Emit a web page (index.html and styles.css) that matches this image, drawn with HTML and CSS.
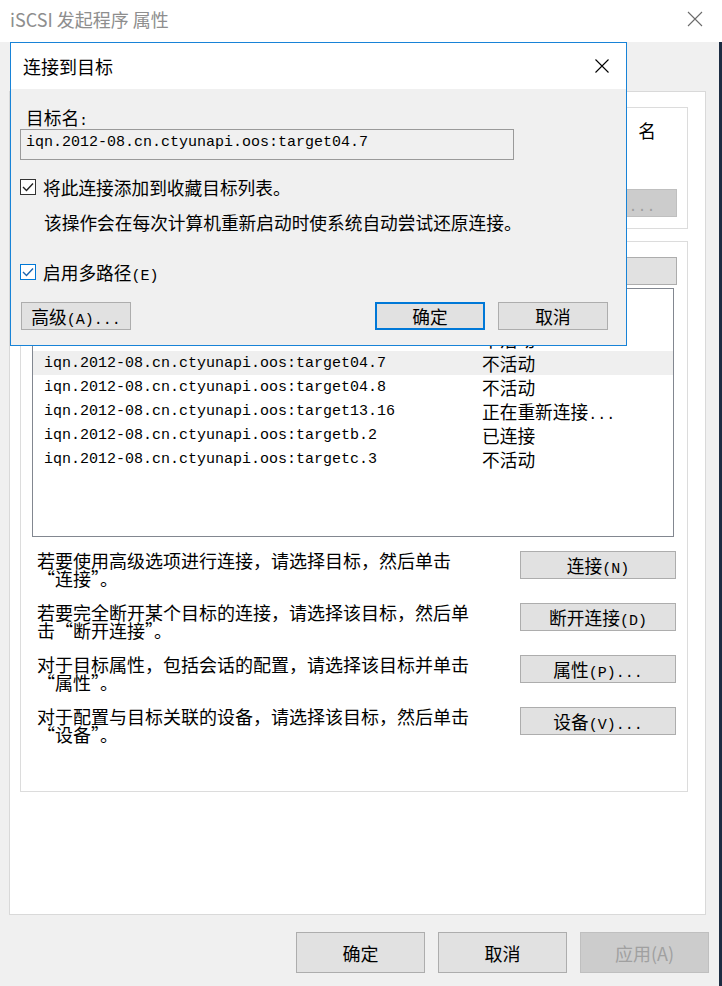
FILE: index.html
```html
<!DOCTYPE html>
<html lang="zh-CN">
<head>
    <meta charset="UTF-8">
    <meta name="viewport" content="width=device-width, initial-scale=1.0">
    <title>iSCSI 发起程序 属性</title>
    <link rel="stylesheet" href="styles.css">
</head>
<body>

    <div class="window">
        <div class="titlebar">
            <span class="title">iSCSI 发起程序 属性</span>
            <svg class="close" width="16" height="16" viewBox="0 0 16 16">
                <path d="M1 1 L15 15 M15 1 L1 15" stroke="#6b6b6b" stroke-width="1.1" fill="none"/>
            </svg>
        </div>

        <div class="client">
            <div class="page">
                <div class="group quick">
                    <div class="quick-line">名</div>
                    <button class="btn disabled">快速连接<span class="a">(Q)...</span></button>
                </div>

                <div class="group targets">
                    <button class="btn refresh">刷新<span class="a">(R)</span></button>

                    <div class="list">
                        <div class="row"><span class="name">iqn.2012-08.cn.ctyunapi.oos:target04.6</span><span class="state">不活动</span></div>
                        <div class="row selected"><span class="name">iqn.2012-08.cn.ctyunapi.oos:target04.7</span><span class="state">不活动</span></div>
                        <div class="row"><span class="name">iqn.2012-08.cn.ctyunapi.oos:target04.8</span><span class="state">不活动</span></div>
                        <div class="row"><span class="name">iqn.2012-08.cn.ctyunapi.oos:target13.16</span><span class="state">正在重新连接<span class="a">...</span></span></div>
                        <div class="row"><span class="name">iqn.2012-08.cn.ctyunapi.oos:targetb.2</span><span class="state">已连接</span></div>
                        <div class="row"><span class="name">iqn.2012-08.cn.ctyunapi.oos:targetc.3</span><span class="state">不活动</span></div>
                    </div>

                    <div class="actions">
                        <div class="action">
                            <p>若要使用高级选项进行连接，请选择目标，然后单击“连接”。</p>
                            <button class="btn act">连接<span class="a">(N)</span></button>
                        </div>
                        <div class="action">
                            <p>若要完全断开某个目标的连接，请选择该目标，然后单击“断开连接”。</p>
                            <button class="btn act">断开连接<span class="a">(D)</span></button>
                        </div>
                        <div class="action">
                            <p>对于目标属性，包括会话的配置，请选择该目标并单击“属性”。</p>
                            <button class="btn act">属性<span class="a">(P)...</span></button>
                        </div>
                        <div class="action">
                            <p>对于配置与目标关联的设备，请选择该目标，然后单击“设备”。</p>
                            <button class="btn act">设备<span class="a">(V)...</span></button>
                        </div>
                    </div>
                </div>
            </div>

            <div class="footer">
                <button class="fbtn">确定</button>
                <button class="fbtn">取消</button>
                <button class="fbtn off">应用(A)</button>
            </div>
        </div>
    </div>

    <div class="dialog">
        <div class="dlg-title">
            <span>连接到目标</span>
            <svg width="14" height="14" viewBox="0 0 14 14">
                <path d="M0.5 0.5 L13.5 13.5 M13.5 0.5 L0.5 13.5" stroke="#000" stroke-width="1.1" fill="none"/>
            </svg>
        </div>
        <div class="dlg-body">
            <div class="label">目标名<span class="a">:</span></div>
            <div class="field">iqn.2012-08.cn.ctyunapi.oos:target04.7</div>

            <div class="check first">
                <span class="box">
                    <svg width="14" height="14" viewBox="0 0 14 14"><path d="M2 7 L5.5 10.5 L12 3.5" stroke="#222" stroke-width="1.4" fill="none"/></svg>
                </span>
                <span>将此连接添加到收藏目标列表。</span>
            </div>
            <div class="note">该操作会在每次计算机重新启动时使系统自动尝试还原连接。</div>

            <div class="check second">
                <span class="box">
                    <svg width="14" height="14" viewBox="0 0 14 14"><path d="M2 7 L5.5 10.5 L12 3.5" stroke="#1a64b0" stroke-width="1.4" fill="none"/></svg>
                </span>
                <span>启用多路径<span class="a">(E)</span></span>
            </div>

            <div class="dlg-buttons">
                <button class="btn dbtn">高级<span class="a">(A)...</span></button>
                <span class="spacer"></span>
                <button class="btn dbtn default">确定</button>
                <button class="btn dbtn">取消</button>
            </div>
        </div>
    </div>

</body>
</html>
```

FILE: styles.css
```css
* {
    box-sizing: border-box;
}

body {
    margin: 0;
    width: 722px;
    height: 986px;
    overflow: hidden;
    position: relative;
    background-color: #f0f0f0;
    color: #000;
    font-family: "Noto Sans CJK SC", sans-serif;
    font-size: 17.7px;
}

.a {
    font-family: "Liberation Mono", monospace;
    font-size: 15px;
    line-height: 0;
}

.window {
    display: flex;
    flex-direction: column;
    height: 986px;
}

.titlebar {
    height: 42px;
    background-color: #fff;
    display: flex;
    align-items: center;
    justify-content: space-between;
    padding: 0 19px 4px 10px;
}

.title {
    font-size: 18px;
    line-height: 20px;
    color: #8e8e8e;
}

.client {
    flex: 1;
    display: flex;
    flex-direction: column;
    padding: 49px 13px 0 9px;
    border-right: 3px solid #1c2c42;
}

.page {
    height: 824px;
    background-color: #fff;
    border: 1px solid #d9d9d9;
    padding: 15px 17px 0 10px;
}

.group {
    border: 1px solid #dcdcdc;
    display: flex;
    flex-direction: column;
}

.quick {
    padding: 13px 10px 11px 10px;
}

.quick-line {
    display: flex;
    justify-content: flex-end;
    white-space: nowrap;
    line-height: 18px;
    padding-right: 21px;
}

.btn {
    font-family: "Noto Sans CJK SC", sans-serif;
    font-size: 17.7px;
    color: #000;
    background-color: #e1e1e1;
    border: 1px solid #adadad;
    padding: 0;
    height: 28px;
    line-height: 24px;
    white-space: nowrap;
}

.quick .btn {
    margin-top: 50px;
    align-self: flex-end;
    width: 168px;
}

.btn.disabled {
    background-color: #cccccc;
    border-color: #bfbfbf;
    color: #9f9f9f;
}

.targets {
    margin-top: 12px;
    height: 551px;
    padding: 15px 10px 0 11px;
}

.refresh {
    align-self: flex-end;
    width: 180px;
}

.list {
    margin-top: 3px;
    margin-right: 3px;
    height: 249px;
    border: 1px solid #828790;
    padding-top: 38px;
}

.row {
    height: 24px;
    display: grid;
    grid-template-columns: 449px 1fr;
    align-items: center;
}

.row.selected {
    background-color: #efefef;
}

.name {
    padding-left: 11px;
    font-family: "Liberation Mono", monospace;
    font-size: 15px;
    white-space: nowrap;
}

.state {
    white-space: nowrap;
    line-height: 20px;
}

.actions {
    margin-top: 14px;
    padding-left: 5px;
    margin-right: 1px;
    display: flex;
    flex-direction: column;
    gap: 16px;
}

.action {
    height: 36px;
    display: flex;
    justify-content: space-between;
    align-items: flex-start;
}

.action p {
    margin: 0;
    width: 440px;
    font-size: 18px;
    line-height: 18px;
}

.act {
    width: 156px;
}

.footer {
    margin-top: 17px;
    margin-right: -3px;
    display: flex;
    justify-content: flex-end;
    gap: 13px;
}

.fbtn {
    width: 129px;
    height: 41px;
    font-family: "Noto Sans CJK SC", sans-serif;
    font-size: 18px;
    color: #000;
    background-color: #e1e1e1;
    border: 1px solid #adadad;
    padding: 0;
}

.fbtn.off {
    background-color: #cccccc;
    border-color: #bfbfbf;
    color: #a0a0a0;
}

/* modal on top */
.dialog {
    position: absolute;
    left: 10px;
    top: 42px;
    width: 617px;
    height: 304px;
    background-color: #f0f0f0;
    border: 1px solid #1883d7;
    display: flex;
    flex-direction: column;
}

.dlg-title {
    height: 46px;
    flex-shrink: 0;
    background-color: #fff;
    display: flex;
    align-items: center;
    justify-content: space-between;
    padding: 0 17px 0 12px;
    font-size: 18px;
    line-height: 22px;
}

.dlg-body {
    display: flex;
    flex-direction: column;
    padding: 19px 18px 0 9px;
}

.label {
    margin-left: 6px;
    line-height: 18px;
    height: 18px;
}

.field {
    margin-top: 3px;
    width: 494px;
    height: 31px;
    border: 1px solid #9a9a9a;
    background-color: #f0f0f0;
    padding-left: 5px;
    font-family: "Liberation Mono", monospace;
    font-size: 15px;
    line-height: 25px;
}

.check {
    display: flex;
    align-items: center;
    gap: 7px;
    line-height: 18px;
    height: 18px;
    margin-top: 18px;
}

.check.second {
    margin-top: 32px;
}

.box {
    width: 16px;
    height: 16px;
    border: 1px solid #333;
    background-color: #fff;
    display: flex;
    align-items: center;
    justify-content: center;
}

.second .box {
    border-color: #0078d7;
}

.note {
    margin-top: 17px;
    padding-left: 24px;
    line-height: 18px;
    height: 18px;
    white-space: nowrap;
}

.dlg-buttons {
    margin-top: 21px;
    display: flex;
    gap: 13px;
}

.dbtn {
    width: 110px;
}

.dbtn:first-child {
    margin-left: 1px;
}

.dbtn.default {
    border: 2px solid #0078d7;
}

.spacer {
    flex: 1;
}
```
